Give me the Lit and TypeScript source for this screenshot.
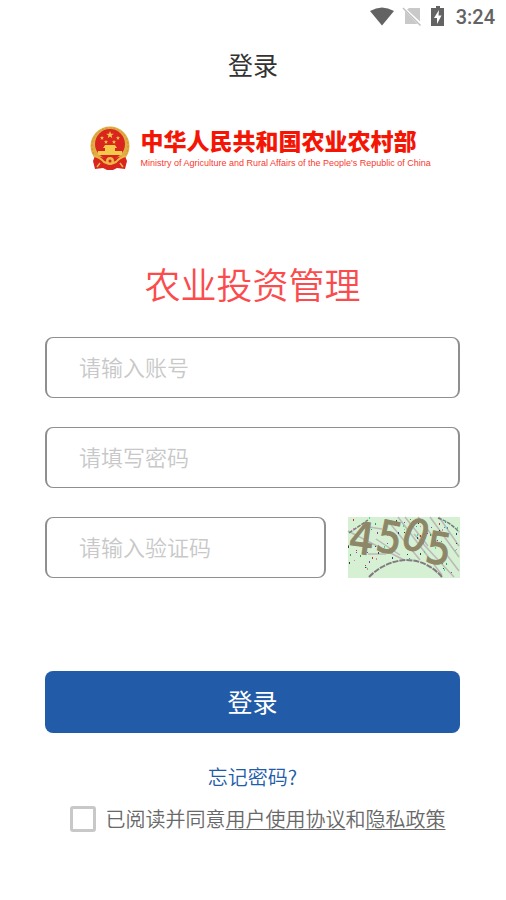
import { LitElement, html, css, svg } from "lit";
import { customElement, property } from "lit/decorators.js";

const SPECK_COLOURS = ["#27408b", "#c5303c", "#2e9d57", "#8d3fb8", "#1fa5b8", "#3b3b3b", "#d87fb4", "#3de07a"];

function specks() {
  let seed = 17;
  const next = (n: number) => {
    seed = (seed * 48271) % 2147483647;
    return seed % n;
  };
  return Array.from({ length: 120 }, (_, i) => ({
    x: next(111),
    y: next(59),
    h: 1 + next(2),
    c: SPECK_COLOURS[i % 8],
  })).filter((s) => s.y < 42 || s.x < 24 || s.x > 90);
}

@customElement("status-bar")
export class StatusBar extends LitElement {
  static styles = css`
    :host {
      display: flex;
      align-items: center;
      justify-content: flex-end;
      gap: 8px;
      height: 32px;
      padding: 0 11px 0 0;
      color: #636363;
    }
    svg {
      display: block;
    }
    .time {
      font: 500 20px/24px Roboto, sans-serif;
      padding-top: 2px;
    }
  `;
  render() {
    return html`
      <svg width="24" height="20" viewBox="0 0 24 20" aria-hidden="true">
        <path d="M0 5Q12-2 24 5L12 19.500Z" fill="#636363" />
      </svg>
      <svg width="20" height="20" viewBox="0 0 20 20" aria-hidden="true">
        <path d="M7 2H18V15.500L5 3.500ZM3 5L15.500 18H3Z" fill="#c9c9c9" />
        <path d="M1 2L18.500 19.500" stroke="#c0c0c0" stroke-width="1.500" />
      </svg>
      <svg width="18" height="22" viewBox="0 0 18 22" aria-hidden="true">
        <path d="M6 1H10V3H14V21H1V3H6Z" fill="#636363" />
        <path d="M9 5L4 13H7V19L11.500 10.500H8.500Z" fill="#fff" />
      </svg>
      <span class="time">3:24</span>
    `;
  }
}

@customElement("ministry-logo")
export class MinistryLogo extends LitElement {
  static styles = css`
    :host {
      display: flex;
      justify-content: center;
      align-items: center;
      gap: 11px;
    }
    .emblem {
      display: block;
      flex: none;
    }
    .names {
      white-space: nowrap;
    }
    .zh {
      font: 900 23px/28px "Noto Sans CJK SC", sans-serif;
      color: #f51505;
    }
    .en {
      width: 0;
      padding-top: 2px;
      font: 9px/14px "Liberation Sans", sans-serif;
      color: #f9392f;
    }
  `;
  render() {
    const star = "M0-1L.24-.32L.95-.31L.38.12L.59.81L0 .4L-.59.81L-.38.12L-.95-.31L-.24-.32Z";
    return html`
      <svg class="emblem" width="40" height="44" viewBox="0 0 40 44" aria-hidden="true">
        <circle cx="20" cy="20" r="19.500" fill="#e0ad45" />
        <circle cx="20" cy="20" r="18" fill="none" stroke="#cf9331" stroke-dasharray="2 2" />
        <circle cx="20" cy="18" r="15" fill="#d9251d" />
        <g fill="#f2c94b">
          <path d=${star} transform="translate(20 9) scale(4)" />
          <path d=${star} transform="translate(12 12) scale(2.200)" />
          <path d=${star} transform="translate(28 12) scale(2.200)" />
          <path d=${star} transform="translate(16 16) scale(2.200)" />
          <path d=${star} transform="translate(24 16) scale(2.200)" />
          <path d="M15 19H25L27 22H13ZM15 22H25V25H32V29H8V25H15Z" />
        </g>
        <path d="M5 30Q20 33 35 30L37 35L35 43L27 42L23 44H17L13 42L5 43L3 35Z" fill="#d9251d" />
        <path d="M4 30Q10 31 14 36Q20 39 26 36Q30 31 36 30" fill="none" stroke="#e8b747" stroke-width="2" />
        <path d="M10 37L7 41M30 37L33 41" fill="none" stroke="#e8b747" stroke-width="1.500" />
        <circle cx="20" cy="35" r="4" fill="#e8b747" />
        <circle cx="20" cy="35" r="1.500" fill="#d9251d" />
      </svg>
      <div class="names">
        <div class="zh">中华人民共和国农业农村部</div>
        <div class="en">Ministry of Agriculture and Rural Affairs of the People's Republic of China</div>
      </div>
    `;
  }
}

@customElement("captcha-picture")
export class CaptchaPicture extends LitElement {
  @property() code = "4505";
  static styles = css`
    :host {
      display: block;
    }
    svg {
      display: block;
      width: 100%;
      height: 100%;
      overflow: visible;
    }
    .digit {
      font-family: "Liberation Sans Narrow", "DejaVu Sans Condensed", sans-serif;
      font-size: 44px;
      fill: #8d8768;
      stroke: #8d8768;
      text-anchor: middle;
    }
  `;
  render() {
    const places = [
      { x: 14, y: 37, turn: 8 },
      { x: 42, y: 36, turn: 12 },
      { x: 68, y: 34, turn: 22 },
      { x: 91, y: 47, turn: 10 },
    ];
    return html`
      <svg viewBox="0 0 112 61" aria-hidden="true">
        <rect width="112" height="61" fill="#d6f0d3" />
        <g fill="none" stroke="#bcb8b7" stroke-width="1.500">
          <path d="M40 4L72 43M50 0L94 58M57 0L80 29M70 0L111 54M82 0L111 40M91 0L111 29M0 14L56 43M14 9L34 12M20 37H38M28 22L52 38M66 17L106 60" />
        </g>
        <g fill="none" stroke="#77777c">
          <path d="M21 60Q37 44 58 43Q79 43 94 60" stroke="#817a80" stroke-width="2" stroke-dasharray="6 1" />
          <path d="M1 16L20 3M90 1Q102 5 111 15" stroke-width="1.500" stroke-dasharray="4 1" />
        </g>
        ${specks().map((s) => svg`<rect x=${s.x} y=${s.y} width="1" height=${s.h} fill=${s.c} />`)}
        ${places.map(
          (p, i) => svg`<text class="digit" x=${p.x} y=${p.y}
            transform="rotate(${p.turn} ${p.x} ${p.y - 16})">${this.code[i]}</text>`
        )}
      </svg>
    `;
  }
}

@customElement("app-root")
export class AppRoot extends LitElement {
  static styles = css`
    :host {
      display: block;
      min-height: 100vh;
      background: #fff;
      font-family: "Noto Sans CJK SC", sans-serif;
      color: #333;
    }
    * {
      box-sizing: border-box;
    }
    .bar {
      margin: 0;
      padding: 14px 0 18px;
      text-align: center;
      font-size: 25px;
      line-height: 36px;
      font-weight: 400;
    }
    ministry-logo {
      margin-top: 26px;
    }
    main {
      padding: 0 46px 0 45px;
    }
    .heading {
      margin: 86px 0 27px;
      text-align: center;
      font-size: 36px;
      line-height: 54px;
      font-weight: 350;
      color: #fb4b4d;
    }
    form {
      display: flex;
      flex-direction: column;
      gap: 29px;
    }
    .field {
      width: 100%;
      min-width: 0;
      height: 61px;
      padding: 0 32px 4px;
      border: solid #8f8f8f;
      border-width: 1px 2px;
      border-radius: 8px;
      background: #fff;
      font: 350 22px/32px "Noto Sans CJK SC", sans-serif;
      color: #333;
      outline: none;
    }
    .field::placeholder {
      color: #c8c8c8;
      opacity: 1;
    }
    .check {
      display: flex;
      gap: 22px;
    }
    .refresh {
      flex: none;
      width: 112px;
      height: 61px;
      padding: 0;
      border: 0;
      background: none;
    }
    .refresh captcha-picture {
      height: 100%;
    }
    .submit {
      height: 62px;
      margin-top: 64px;
      padding: 0 0 2px;
      border: 0;
      border-radius: 8px;
      background: #225ca9;
      color: #fff;
      font: 400 25px/36px "Noto Sans CJK SC", sans-serif;
    }
    .forgot {
      display: block;
      width: fit-content;
      margin: 29px auto 12px;
      font-size: 20px;
      line-height: 30px;
      font-weight: 350;
      color: #225ca9;
      text-decoration: none;
    }
    .agree {
      display: flex;
      justify-content: center;
      align-items: center;
      gap: 10px;
      padding-left: 10px;
      font-size: 20px;
      line-height: 30px;
      font-weight: 350;
      color: #686868;
      white-space: nowrap;
    }
    .tick {
      appearance: none;
      flex: none;
      width: 26px;
      height: 26px;
      margin: 0;
      border: 3px solid #c8c8c8;
      border-radius: 3px;
      background: #fff;
    }
    .tick:checked {
      background: #225ca9;
    }
    .agree a {
      color: inherit;
      text-decoration: underline;
      text-decoration-thickness: 1px;
      text-underline-offset: 2px;
    }
  `;
  render() {
    return html`
      <status-bar></status-bar>
      <h1 class="bar">登录</h1>
      <ministry-logo></ministry-logo>
      <main>
        <h2 class="heading">农业投资管理</h2>
        <form @submit=${(e: Event) => e.preventDefault()}>
          <input class="field" type="text" placeholder="请输入账号" aria-label="账号" />
          <input class="field" type="password" placeholder="请填写密码" aria-label="密码" />
          <div class="check">
            <input class="field" type="text" placeholder="请输入验证码" aria-label="验证码" />
            <button class="refresh" type="button" aria-label="刷新验证码"><captcha-picture></captcha-picture></button>
          </div>
          <button class="submit" type="submit">登录</button>
        </form>
        <a class="forgot" href="#forgot">忘记密码?</a>
        <div class="agree">
          <input class="tick" id="agree" type="checkbox" />
          <span><label for="agree">已阅读并同意</label><a href="#terms">用户使用协议</a>和<a href="#privacy">隐私政策</a></span>
        </div>
      </main>
    `;
  }
}
